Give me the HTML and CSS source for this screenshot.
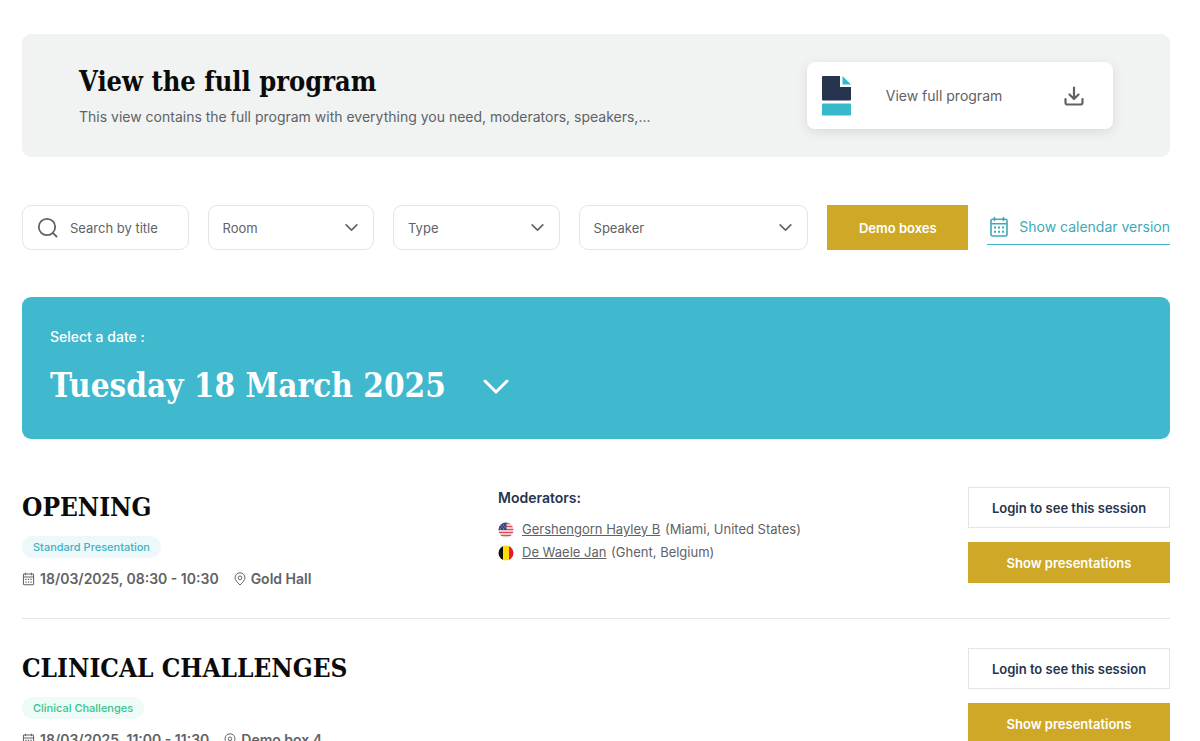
FILE: index.html
```html
<!DOCTYPE html>
<html lang="en">
<head>
<meta charset="utf-8">
<meta name="viewport" content="width=device-width, initial-scale=1">
<title>Program</title>
<link rel="stylesheet" href="styles.css">
</head>
<body>
<svg class="sprite" aria-hidden="true">
  <symbol id="chevron" viewBox="0 0 14 14"><path d="M2 4.500l5 5 5-5" fill="none" stroke="currentColor" stroke-width="1.500" stroke-linecap="round"/></symbol>
  <symbol id="calendar" viewBox="0 0 20 22">
    <path d="M3.500 3.200h13q1.500 0 1.500 1.500v13.800q0 1.500-1.500 1.500h-13Q2 20 2 18.500V4.700q0-1.500 1.500-1.500zM2 7.800h16M5.500 1.500v3M14.500 1.500v3" fill="none" stroke="currentColor" stroke-width="1.600" stroke-linecap="round"/>
    <path d="M5 10.500h2v2H5zM9 10.500h2v2H9zM13 10.500h2v2h-2zM5 14.800h2v2H5zM9 14.800h2v2H9zM13 14.800h2v2h-2z" fill="currentColor"/>
  </symbol>
  <symbol id="pin" viewBox="0 0 12 14"><path d="M6 13C3.500 10.500 1 8.200 1 5.800a5 5 0 0 1 10 0C11 8.200 8.500 10.500 6 13z" fill="none" stroke="currentColor"/><circle cx="6" cy="5.800" r="1.800" fill="none" stroke="currentColor"/></symbol>
</svg>
<main class="page">
  <section class="banner">
    <div>
      <h1 class="title">View the full program</h1>
      <p class="lead">This view contains the full program with everything you need, moderators, speakers,...</p>
    </div>
    <a class="download" href="#">
      <svg width="30" height="40" viewBox="0 0 30 40" aria-hidden="true"><path d="M1 0h17v11h11v12.500q0 1-1 1H1q-1 0-1-1V1q0-1 1-1z" fill="#26344f"/><path d="M20.500 0L29 8.500h-8.500z" fill="#36b9cb"/><rect y="27.500" width="29" height="12" rx="1" fill="#36b9cb"/></svg>
      <span class="download-label">View full program</span>
      <svg width="20" height="20" viewBox="0 0 20 20" fill="none" stroke="#606266" stroke-width="2.200" stroke-linecap="round" stroke-linejoin="round" aria-hidden="true"><path d="M10 1.500v11M5.500 8.500l4.500 4.500 4.500-4.500M1.500 13v3.500q0 2 2 2h13q2 0 2-2V13"/></svg>
    </a>
  </section>

  <form class="filters">
    <label class="field search">
      <svg width="22" height="22" viewBox="0 0 22 22" fill="none" stroke="#606266" stroke-width="1.800" aria-hidden="true"><circle cx="10" cy="10" r="8.200"/><path d="M15.800 15.800l3.700 3.700" stroke-linecap="round"/></svg>
      <input class="search-input" type="text" placeholder="Search by title" aria-label="Search by title">
    </label>
    <div class="field"><select class="select" aria-label="Room"><option>Room</option></select><svg class="chevron"><use href="#chevron"/></svg></div>
    <div class="field"><select class="select" aria-label="Type"><option>Type</option></select><svg class="chevron"><use href="#chevron"/></svg></div>
    <div class="field"><select class="select" aria-label="Speaker"><option>Speaker</option></select><svg class="chevron"><use href="#chevron"/></svg></div>
    <button class="button gold demo" type="button">Demo boxes</button>
    <a class="calendar-link" href="#"><svg width="20" height="22"><use href="#calendar"/></svg>Show calendar version</a>
  </form>

  <section class="date-panel">
    <label class="date-label" for="date">Select a date :</label>
    <div class="date-picker">
      <select class="date-select" id="date"><option>Tuesday 18 March 2025</option></select>
      <svg class="date-chevron" viewBox="0 0 28 17" aria-hidden="true"><path d="M3 3l11 11L25 3" fill="none" stroke="#fff" stroke-width="3" stroke-linecap="round"/></svg>
    </div>
  </section>

  <article class="session">
    <div class="summary">
      <h2 class="title session-title">OPENING</h2>
      <span class="tag">Standard Presentation</span>
      <p class="meta"><svg width="13" height="14"><use href="#calendar"/></svg><span>18/03/2025, 08:30 - 10:30</span><svg class="pin" width="12" height="14"><use href="#pin"/></svg><span>Gold Hall</span></p>
    </div>
    <div class="people">
      <h3 class="people-title">Moderators:</h3>
      <ul class="people-list">
        <li class="person">
          <svg width="16" height="16" viewBox="0 0 16 16" aria-hidden="true"><clipPath id="disc"><circle cx="8" cy="8" r="7.500"/></clipPath><g clip-path="url(#disc)"><path fill="#f5f0f1" d="M0 0h16v16H0z"/><path d="M0 1.500h16M0 4.500h16M0 7.500h16M0 10.500h16M0 13.500h16" stroke="#d84c5c" stroke-width="1.500"/><path fill="#38477c" d="M0 0h8.500v8H0z"/><path d="M2 3h1M5 3h1M3.500 5h1M6.500 5h1M2 7h1M5 7h1" stroke="#c4cbe2" stroke-width=".7"/></g></svg>
          <span><a class="name" href="#">Gershengorn Hayley B</a> (Miami, United States)</span>
        </li>
        <li class="person">
          <svg width="16" height="16" viewBox="0 0 16 16" aria-hidden="true"><g clip-path="url(#disc)"><path fill="#111" d="M0 0h5v16H0z"/><path fill="#ffdc00" d="M5 0h6v16H5z"/><path fill="#e61b25" d="M11 0h5v16h-5z"/></g></svg>
          <span><a class="name" href="#">De Waele Jan</a> (Ghent, Belgium)</span>
        </li>
      </ul>
    </div>
    <div class="actions">
      <button class="button outline" type="button">Login to see this session</button>
      <button class="button gold" type="button">Show presentations</button>
    </div>
  </article>

  <article class="session">
    <div class="summary">
      <h2 class="title session-title">CLINICAL CHALLENGES</h2>
      <span class="tag green">Clinical Challenges</span>
      <p class="meta"><svg width="13" height="14"><use href="#calendar"/></svg><span>18/03/2025, 11:00 - 11:30</span><svg class="pin" width="12" height="14"><use href="#pin"/></svg><span>Demo box 4</span></p>
    </div>
    <div class="people"></div>
    <div class="actions">
      <button class="button outline" type="button">Login to see this session</button>
      <button class="button gold" type="button">Show presentations</button>
    </div>
  </article>
</main>
</body>
</html>
```

FILE: styles.css
```css
* { box-sizing: border-box; }
html { scrollbar-width: none; }
body { margin: 0; background: #fff; color: #606266; font: 14px/20px Inter, "Liberation Sans", sans-serif; }
.sprite { position: absolute; width: 0; height: 0; }
.page { padding: 34px 30px 0 22px; }
h1, h2, h3, p, ul { margin: 0; padding: 0; }
.title { color: #0b0b0b; font: 700 27px/40px "Roboto Slab", "DejaVu Serif Condensed", "DejaVu Serif", serif; white-space: nowrap; }
.session-title { font-size: 26px; }

.banner { display: flex; align-items: center; justify-content: space-between; padding: 28px 57px; background: #f1f3f2; border-radius: 9px; }
.lead { line-height: 24px; padding-top: 3px; }
.download { display: flex; align-items: center; justify-content: space-between; width: 306px; padding: 14px 29px 13px 15px; border-radius: 8px; background: #fff; color: #606266; text-decoration: none; box-shadow: 0 3px 12px rgba(0, 0, 0, .1); }
.download-label { margin-right: 28px; }

.filters { display: grid; grid-template-columns: 166fr 166fr 166fr 229fr 141px auto; gap: 19px; margin-top: 48px; }
.field { position: relative; min-width: 0; height: 45px; border: 1px solid #e4e5e6; border-radius: 9px; }
.search { display: flex; align-items: center; gap: 11px; padding-left: 14px; }
.search svg { flex: none; }
.search-input { flex: 1; min-width: 0; padding: 0; border: 0; outline: 0; background: none; font: 13px/20px Inter, sans-serif; color: #606266; }
.search-input::placeholder { color: #606266; opacity: 1; }
.select { appearance: none; width: 100%; height: 100%; padding: 0 40px 0 14px; border: 0; border-radius: 9px; background: none; font: 13px/20px Inter, sans-serif; color: #606266; }
.chevron { position: absolute; right: 14px; top: 14px; width: 15px; height: 15px; pointer-events: none; }
.button { border: 0; padding: 0; height: 41px; font: 600 13px/20px Inter, sans-serif; }
.gold { background: #cea826; color: #fff; }
.outline { background: #fff; border: 1px solid #e4e5e8; color: #26344f; }
.demo { height: 45px; }
.calendar-link { display: flex; align-items: center; gap: 10px; height: 40px; padding: 5px 0 0 2px; border-bottom: 1px solid #3fb3c5; color: #3fa9b8; text-decoration: none; white-space: nowrap; }

.date-panel { margin-top: 47px; padding: 30px 28px 28px; border-radius: 9px; background: #40b8cd; color: #fff; }
.date-label { display: block; font-weight: 500; }
.date-picker { display: flex; align-items: center; gap: 36px; margin-top: 14px; height: 50px; }
.date-select { appearance: none; padding: 0; border: 0; background: none; color: #fff; font: 700 33px/50px "Roboto Slab", "DejaVu Serif Condensed", "DejaVu Serif", serif; }
.date-chevron { width: 28px; height: 17px; }

.session { display: grid; grid-template-columns: 476px 1fr 202px; padding-bottom: 29px; border-bottom: 1px solid #e5e6e8; margin-top: 48px; }
.session + .session { margin-top: 29px; }
.tag { display: table; margin-top: 9px; padding: 0 11px; border-radius: 11px; background: #edf8fa; color: #3fb3c5; font-size: 11px; font-weight: 500; line-height: 22px; }
.green { background: #effbf6; color: #38c48e; }
.meta { display: flex; align-items: center; gap: 5px; margin-top: 11px; font-weight: 600; }
.pin { margin-left: 10px; }
.people-title { color: #26344f; font-size: 14px; font-weight: 600; line-height: 22px; }
.people-list { list-style: none; margin-top: 9px; }
.person { display: flex; align-items: center; gap: 8px; font-size: 13px; line-height: 23px; }
.name { color: inherit; margin-right: 1px; }
.actions { display: flex; flex-direction: column; gap: 14px; }
```
